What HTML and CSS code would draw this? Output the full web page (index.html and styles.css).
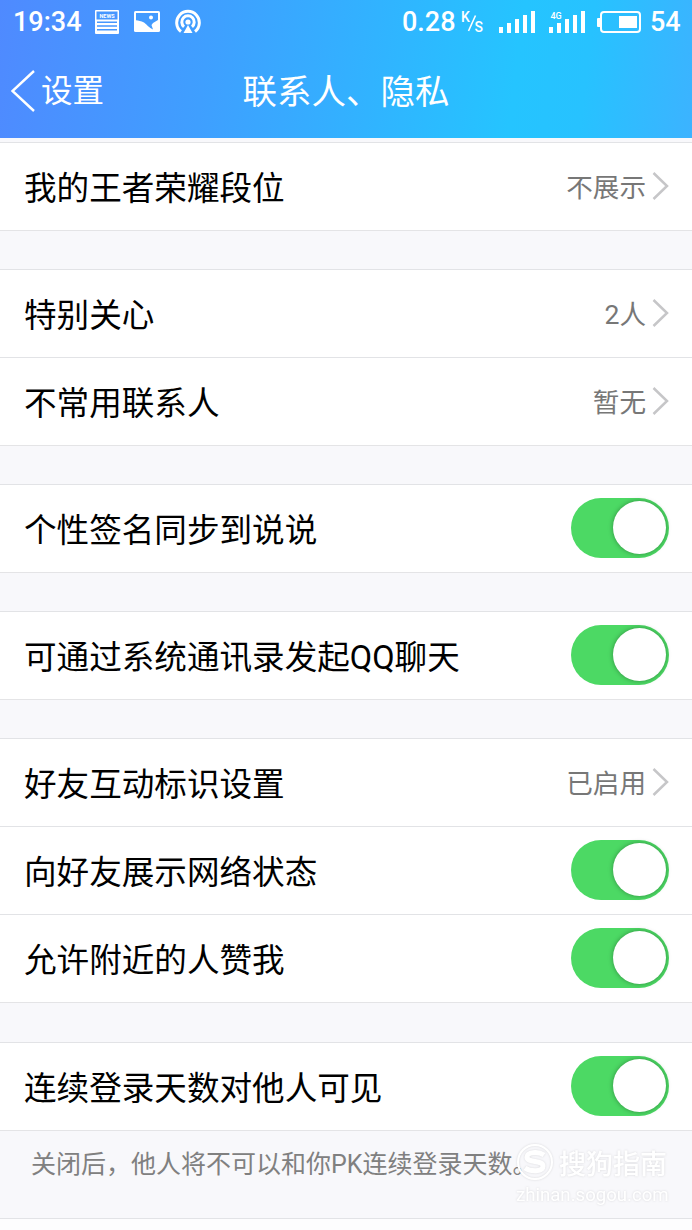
FILE: index.html
```html
<!DOCTYPE html>
<html lang="zh-CN">
<head>
    <meta charset="UTF-8">
    <title>联系人、隐私</title>
    <link rel="stylesheet" href="styles.css">
</head>
<body>
    <header class="header">
        <div class="status-bar">
            <span class="clock">19:34</span>
            <svg class="icon-news" width="24" height="24" viewBox="0 0 24 24">
                <rect width="24" height="24" rx="1" fill="#fff"/>
                <path d="M1.500 1.500h21v8h-21zM2 11.500h20v1.500H2zM2 15.200h20v1.500H2zM2 19h20v1.500H2z" fill="#4697ff"/>
                <text x="12" y="7.600" class="news-text">NEWS</text>
            </svg>
            <svg class="icon-image" width="26" height="21" viewBox="0 0 26 21">
                <rect width="26" height="21" rx="1.5" fill="#fff"/>
                <path d="M2 2h22v7l-5 3-1.500 2 1.500 4.500C15 17 13 13.500 10 11.500C7 10 4.500 9.500 2 9.200z" fill="#439bff"/>
                <circle cx="17" cy="6.500" r="2" fill="#fff"/>
            </svg>
            <svg class="icon-cast" width="26" height="25" viewBox="0 0 26 25">
                <g fill="none" stroke="#fff" stroke-width="3">
                    <path d="M6 22.500A11.300 11.300 0 1 1 20 22.500"/>
                    <path d="M9 17.800A6.200 6.200 0 1 1 17 17.800"/>
                </g>
                <circle cx="13" cy="13" r="2.600" fill="#fff"/>
                <path d="M13 16l4.500 8h-9z" fill="#fff"/>
            </svg>
            <span class="speed">0.28</span>
            <svg class="icon-unit" width="26" height="24" viewBox="0 0 26 24">
                <text x="1" y="11.500" class="unit-text">K</text>
                <path d="M15.500 5.500L8.500 21" stroke="#fff" stroke-width="1.600"/>
                <text x="14.500" y="21.500" class="unit-text">S</text>
            </svg>
            <svg class="icon-signal" width="36" height="22" viewBox="0 0 36 22">
                <path d="M0 16h4v6H0zM8 12h4v10H8zM16 8h4v14h-4zM24 4h4v18h-4zM32 0h4v22h-4z" fill="#fff"/>
            </svg>
            <svg class="icon-signal-4g" width="36" height="22" viewBox="0 0 36 22">
                <path d="M0 16h4v6H0zM8 12h4v10H8zM16 8h4v14h-4zM24 4h4v18h-4zM32 0h4v22h-4z" fill="#fff"/>
                <text x="1.500" y="7.500" class="network-text">4G</text>
            </svg>
            <svg class="icon-battery" width="44" height="22" viewBox="0 0 44 22">
                <rect x="4" y="1" width="39" height="20" rx="3" fill="none" stroke="#fff" stroke-width="2"/>
                <path d="M0 8q0-1 1-1h2v9H1q-1 0-1-1zM22 5h18v12H22z" fill="#fff"/>
            </svg>
            <span class="battery-level">54</span>
        </div>
        <div class="nav">
            <a class="back">
                <svg width="24" height="42" viewBox="0 0 24 42">
                    <path d="M23 1L1.500 21L23 41" fill="none" stroke="#fff" stroke-width="2.400"/>
                </svg>
                <span>设置</span>
            </a>
            <h1>联系人、隐私</h1>
        </div>
    </header>

    <main class="settings">
        <section class="group">
            <div class="row">
                <span class="label">我的王者荣耀段位</span>
                <span class="value">不展示</span>
                <svg class="arrow" width="17" height="28" viewBox="0 0 17 28"><path d="M1.500 1L15 14L1.500 27"/></svg>
            </div>
        </section>

        <section class="group">
            <div class="row">
                <span class="label">特别关心</span>
                <span class="value">2人</span>
                <svg class="arrow" width="17" height="28" viewBox="0 0 17 28"><path d="M1.500 1L15 14L1.500 27"/></svg>
            </div>
            <div class="row">
                <span class="label">不常用联系人</span>
                <span class="value">暂无</span>
                <svg class="arrow" width="17" height="28" viewBox="0 0 17 28"><path d="M1.500 1L15 14L1.500 27"/></svg>
            </div>
        </section>

        <section class="group">
            <div class="row">
                <span class="label">个性签名同步到说说</span>
                <span class="switch"><span class="knob"></span></span>
            </div>
        </section>

        <section class="group">
            <div class="row">
                <span class="label">可通过系统通讯录发起QQ聊天</span>
                <span class="switch"><span class="knob"></span></span>
            </div>
        </section>

        <section class="group group-friends">
            <div class="row">
                <span class="label">好友互动标识设置</span>
                <span class="value">已启用</span>
                <svg class="arrow" width="17" height="28" viewBox="0 0 17 28"><path d="M1.500 1L15 14L1.500 27"/></svg>
            </div>
            <div class="row">
                <span class="label">向好友展示网络状态</span>
                <span class="switch"><span class="knob"></span></span>
            </div>
            <div class="row">
                <span class="label">允许附近的人赞我</span>
                <span class="switch"><span class="knob"></span></span>
            </div>
        </section>

        <section class="group group-last">
            <div class="row">
                <span class="label">连续登录天数对他人可见</span>
                <span class="switch"><span class="knob"></span></span>
            </div>
        </section>

        <div class="note">
            <p>关闭后，他人将不可以和你PK连续登录天数。</p>
            <div class="watermark">
                <div class="watermark-brand">
                    <svg width="38" height="40" viewBox="0 0 38 40">
                        <circle cx="19" cy="20" r="17" fill="none" stroke="#fff" stroke-width="2"/>
                        <path d="M28 13C22 9 11 10 11 15C11 21 27 18 27 24C27 30 15 30 9 26" fill="none" stroke="#fff" stroke-width="5"/>
                    </svg>
                    <span>搜狗指南</span>
                </div>
                <div class="watermark-url">zhinan.sogou.com</div>
            </div>
        </div>
    </main>
</body>
</html>
```
FILE: styles.css
```css
* {
    box-sizing: border-box;
}

body {
    margin: 0;
    background-color: #fdfdfe;
    font-family: Roboto, "Noto Sans CJK SC", sans-serif;
    color: #000;
}

.header {
    height: 138px;
    background: linear-gradient(97deg, #4f8aff 0%, #3f9fff 30%, #25c4ff 74%, #27c2ff 84%, #3cb3ff 100%);
    color: #fff;
}

.status-bar {
    display: flex;
    align-items: center;
    height: 43px;
    padding-left: 13px;
    font-size: 27px;
    font-weight: 500;
    line-height: 41px;
}

.clock,
.speed,
.battery-level {
    padding-top: 2px;
}

.clock {
    width: 82px;
}

.icon-news {
    margin-right: 15px;
}

.icon-image {
    margin-right: 15px;
}

.icon-cast {
    margin-right: 201px;
}

.news-text {
    fill: #fff;
    font-size: 5.5px;
    font-weight: 700;
    text-anchor: middle;
}

.network-text {
    fill: #fff;
    font-size: 9px;
    font-weight: 500;
}

.speed {
    width: 58px;
}

.icon-unit {
    margin-right: 13px;
}

.unit-text {
    fill: #fff;
    font-size: 14px;
    font-weight: 500;
}

.icon-signal {
    margin-right: 14px;
}

.icon-signal-4g {
    margin-right: 12px;
}

.icon-battery {
    margin-right: 9px;
}

.nav {
    display: grid;
    grid-template-columns: 1fr auto 1fr;
    align-items: center;
    height: 95px;
    padding-left: 11px;
    padding-right: 11px;
}

.back {
    display: flex;
    align-items: center;
    gap: 6px;
    font-size: 31.5px;
    line-height: 93px;
}

.back span {
    padding-top: 2px;
}

.nav h1 {
    margin: 0;
    padding-top: 3px;
    font-size: 34.5px;
    font-weight: 400;
    line-height: 92px;
}

.settings {
    padding-top: 4px;
    background-color: #f8f8fb;
}

.group {
    margin-bottom: 38px;
    border-bottom: 1px solid #e4e4e6;
    background-color: #fff;
}

.group-friends {
    margin-bottom: 39px;
}

.group-last {
    margin-bottom: 0;
}

.row {
    display: flex;
    align-items: center;
    height: 88px;
    padding: 0 23px 2px 24px;
    border-top: 1px solid #e2e3e6;
}

.label {
    flex: 1;
    font-size: 32.6px;
}

.value {
    margin-right: 6px;
    color: #777;
    font-size: 26.6px;
}

.arrow {
    margin-top: 1px;
}

.arrow path {
    fill: none;
    stroke: #c6c6c8;
    stroke-width: 2.5;
}

.switch {
    display: flex;
    align-items: center;
    justify-content: flex-end;
    width: 98px;
    height: 60px;
    padding-right: 3px;
    border-radius: 30px;
    background-color: #4cd964;
}

.knob {
    width: 53px;
    height: 53px;
    border-radius: 50%;
    background-color: #fff;
    box-shadow: 0 0 5px rgba(0, 0, 0, 0.35);
}

.note {
    position: relative;
    height: 88px;
    border-bottom: 1px solid #e2e3e6;
}

.note p {
    margin: 0;
    padding-left: 31px;
    color: #808080;
    font-size: 25px;
    line-height: 67px;
}

/* watermark lies over the note text */
.watermark {
    position: absolute;
    top: 11px;
    left: 516px;
    color: #fff;
    filter: drop-shadow(0 0 1px rgba(0, 0, 0, 0.13));
}

.watermark-brand {
    display: flex;
    align-items: center;
    gap: 5px;
    height: 40px;
    font-size: 27px;
    font-weight: 500;
}

.watermark-url {
    font-size: 18.6px;
    line-height: 27px;
}
```
